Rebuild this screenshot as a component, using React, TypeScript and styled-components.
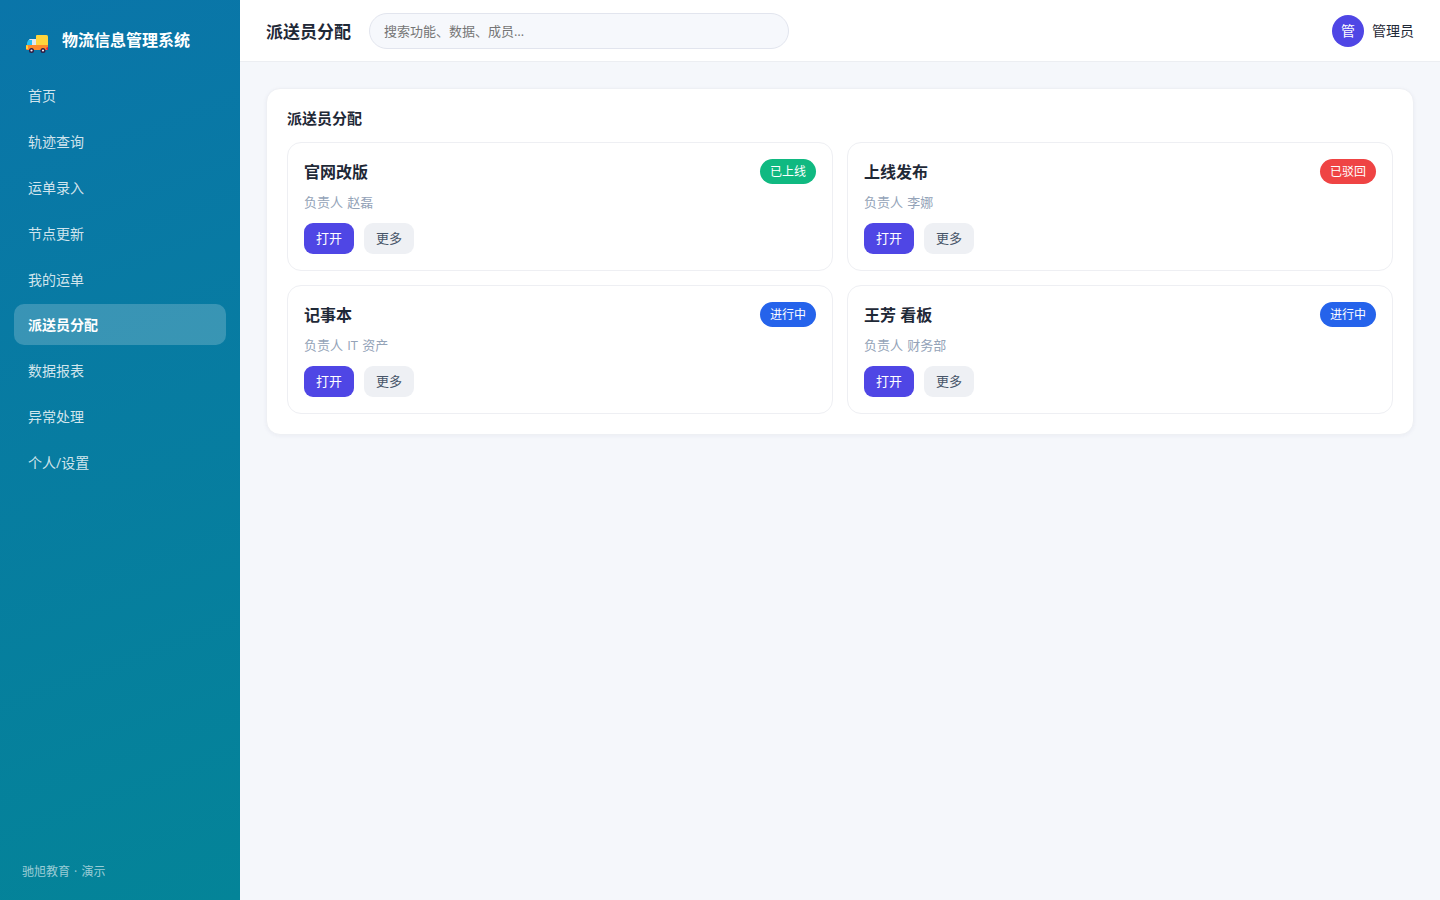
import React from 'react';
import styled, { createGlobalStyle } from 'styled-components';

const GlobalStyle = createGlobalStyle`
  * { box-sizing: border-box; }
  body {
    margin: 0;
    background: #f5f7fb;
    color: #1f2937;
    font-family: "Open Sans", "Noto Sans CJK SC", sans-serif;
    font-size: 14px;
  }
  button, input { font-family: inherit; }
`;

const Layout = styled.div`
  display: flex;
  min-height: 100vh;
`;

const Sidebar = styled.aside`
  display: flex;
  flex-direction: column;
  width: 240px;
  flex-shrink: 0;
  padding: 22px 14px 18px;
  color: #fff;
  background: linear-gradient(160deg, #0a75a9, #048498);
`;

const Brand = styled.div`
  display: flex;
  align-items: center;
  height: 36px;
  margin-bottom: 16px;
  padding-left: 11px;
  gap: 12px;
  font-size: 16px;
  font-weight: 700;
  line-height: 36px;
`;

const TruckIcon = styled.svg`
  width: 25px;
  height: 20px;
  margin-top: 8px;
`;

const Nav = styled.nav`
  display: flex;
  flex-direction: column;
  gap: 4px;
`;

const NavItem = styled.a<{ $active?: boolean }>`
  height: ${(p) => (p.$active ? 41 : 42)}px;
  padding: 0 14px;
  border-radius: 10px;
  font-size: 14px;
  font-weight: ${(p) => (p.$active ? 700 : 400)};
  line-height: ${(p) => (p.$active ? 41 : 43)}px;
  color: ${(p) => (p.$active ? '#fff' : 'rgba(255, 255, 255, 0.82)')};
  background: ${(p) => (p.$active ? 'rgba(255, 255, 255, 0.2)' : 'transparent')};
`;

const SidebarFooter = styled.div`
  margin-top: auto;
  padding-left: 8px;
  font-size: 12px;
  line-height: 20px;
  word-spacing: 1px;
  color: rgba(255, 255, 255, 0.6);
`;

const Main = styled.div`
  flex: 1;
  min-width: 0;
`;

const Topbar = styled.header`
  display: flex;
  align-items: center;
  gap: 18px;
  height: 62px;
  padding: 0 26px;
  background: #fff;
  border-bottom: 1px solid #eceef2;
`;

const PageTitle = styled.h1`
  margin: 0;
  padding-top: 2px;
  font-size: 17px;
  font-weight: 700;
  line-height: 24px;
`;

const Search = styled.input`
  width: 420px;
  height: 36px;
  padding: 0 14px;
  border: 1px solid #e2e5ee;
  border-radius: 18px;
  outline: none;
  background: #f6f8fc;
  font-size: 13px;
  &::placeholder { color: #757575; }
`;

const User = styled.div`
  display: flex;
  align-items: center;
  gap: 8px;
  margin-left: auto;
  font-size: 14px;
  line-height: 20px;
`;

const UserName = styled.span`
  padding-top: 1px;
`;

const Avatar = styled.span`
  display: grid;
  place-items: center;
  width: 32px;
  height: 32px;
  border-radius: 50%;
  color: #fff;
  background: #4f46e5;
`;

const Content = styled.main`
  padding: 26px;
`;

const Panel = styled.section`
  padding: 20px;
  border: 1px solid #eef0f4;
  border-radius: 14px;
  background: #fff;
  box-shadow: 0 1px 4px rgba(30, 41, 90, 0.05);
`;

const PanelTitle = styled.h2`
  margin: 0 0 14px;
  font-size: 15px;
  font-weight: 700;
  line-height: 19px;
`;

const Grid = styled.div`
  display: grid;
  grid-template-columns: 1fr 1fr;
  gap: 14px;
`;

const Card = styled.article`
  height: 129px;
  padding: 16px;
  border: 1px solid #eeeff3;
  border-radius: 14px;
`;

const CardHead = styled.div`
  display: flex;
  align-items: center;
  justify-content: space-between;
  height: 25px;
`;

const CardTitle = styled.h3`
  margin: 0;
  padding-top: 2px;
  font-size: 16px;
  font-weight: 700;
  line-height: 25px;
`;

const Badge = styled.span<{ $color: string }>`
  padding: 0 10px;
  border-radius: 13px;
  font-size: 12px;
  line-height: 25px;
  color: #fff;
  background: ${(p) => p.$color};
`;

const Owner = styled.p`
  margin: 8px 0 11px;
  font-size: 13px;
  line-height: 20px;
  word-spacing: 0.8px;
  color: #94a3b8;
`;

const Actions = styled.div`
  display: flex;
  gap: 10px;
`;

const Button = styled.button<{ $primary?: boolean }>`
  width: 50px;
  height: 31px;
  padding: 0;
  border: 0;
  border-radius: 9px;
  font-size: 13px;
  line-height: 31px;
  color: ${(p) => (p.$primary ? '#fff' : '#475569')};
  background: ${(p) => (p.$primary ? '#4f46e5' : '#eef0f4')};
`;

const navItems = ['首页', '轨迹查询', '运单录入', '节点更新', '我的运单', '派送员分配', '数据报表', '异常处理', '个人/设置'];
const current = '派送员分配';

const cards = [
  { title: '官网改版', owner: '赵磊', status: '已上线', color: '#10b981' },
  { title: '上线发布', owner: '李娜', status: '已驳回', color: '#ef4444' },
  { title: '记事本', owner: 'IT 资产', status: '进行中', color: '#2563eb' },
  { title: '王芳 看板', owner: '财务部', status: '进行中', color: '#2563eb' },
];

const Truck = () => (
  <TruckIcon viewBox="0 0 25 20" aria-hidden="true">
    <path d="M4 6 Q4.2 5 5 5 H11 V11 H2 Z" fill="#e1e6ee" />
    <path d="M3.5 6 H7 V11 H2 V8.5 Z" fill="#26c0f5" />
    <path d="M1 11 H23 V16 H2 Q1 16 1 14.5 Z" fill="#ff8a2b" />
    <path d="M11 2 Q11 1 12 1 H21.5 Q23 1 23 2.5 V11 H11 Z" fill="#ffd43d" />
    <path d="M1 11.5 H3 V15 H1 Z" fill="#ffd43d" />
    <path d="M21 14 L23 13 V16 H22 Z" fill="#e5144f" />
    <circle cx="6.5" cy="16.5" r="2.5" fill="#321b41" />
    <circle cx="18" cy="16.5" r="2.5" fill="#321b41" />
    <circle cx="6.5" cy="16.5" r="1.1" fill="#f1ecf5" />
    <circle cx="18" cy="16.5" r="1.1" fill="#f1ecf5" />
  </TruckIcon>
);

export default function App() {
  return (
    <>
      <GlobalStyle />
      <Layout>
        <Sidebar>
          <Brand>
            <Truck />
            <span>物流信息管理系统</span>
          </Brand>
          <Nav>
            {navItems.map((item) => (
              <NavItem key={item} $active={item === current}>{item}</NavItem>
            ))}
          </Nav>
          <SidebarFooter>驰旭教育 · 演示</SidebarFooter>
        </Sidebar>
        <Main>
          <Topbar>
            <PageTitle>{current}</PageTitle>
            <Search placeholder="搜索功能、数据、成员…" />
            <User>
              <Avatar>管</Avatar>
              <UserName>管理员</UserName>
            </User>
          </Topbar>
          <Content>
            <Panel>
              <PanelTitle>{current}</PanelTitle>
              <Grid>
                {cards.map((card) => (
                  <Card key={card.title}>
                    <CardHead>
                      <CardTitle>{card.title}</CardTitle>
                      <Badge $color={card.color}>{card.status}</Badge>
                    </CardHead>
                    <Owner>负责人 {card.owner}</Owner>
                    <Actions>
                      <Button $primary>打开</Button>
                      <Button>更多</Button>
                    </Actions>
                  </Card>
                ))}
              </Grid>
            </Panel>
          </Content>
        </Main>
      </Layout>
    </>
  );
}
